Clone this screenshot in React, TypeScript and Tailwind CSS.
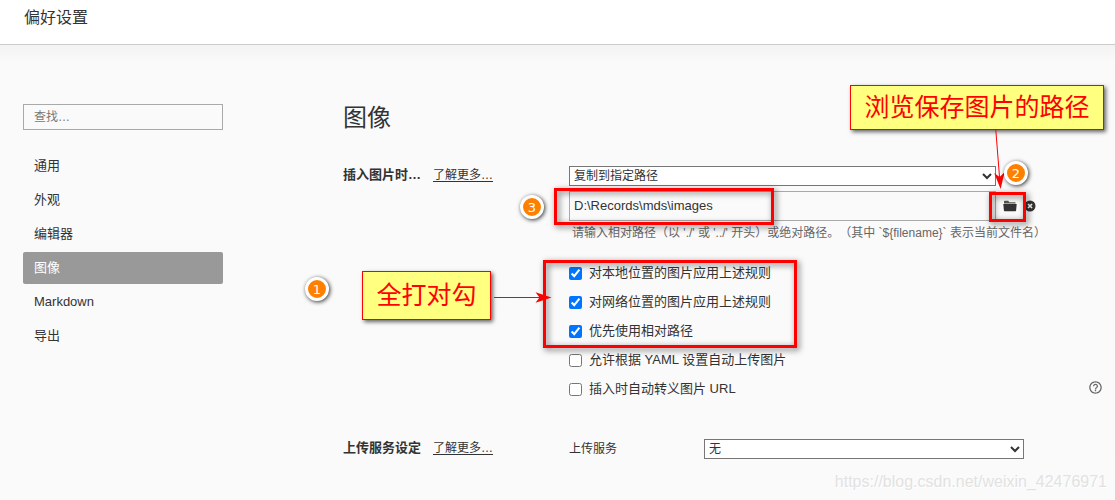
import { useState } from 'react';
import type { ReactNode } from 'react';
import { clsx } from 'clsx';

interface ImageRule {
  id: string;
  label: string;
  checked: boolean;
}

const SECTIONS = ['通用', '外观', '编辑器', '图像', 'Markdown', '导出'];

const IMAGE_RULES: ImageRule[] = [
  { id: 'local', label: '对本地位置的图片应用上述规则', checked: true },
  { id: 'network', label: '对网络位置的图片应用上述规则', checked: true },
  { id: 'relative', label: '优先使用相对路径', checked: true },
  { id: 'yaml', label: '允许根据 YAML 设置自动上传图片', checked: false },
  { id: 'escape', label: '插入时自动转义图片 URL', checked: false },
];

function FolderIcon() {
  return (
    <svg width="14" height="12" viewBox="0 0 14 12" aria-hidden="true">
      <path d="M1 3.4V1.6Q1 .8 1.8.8h3.4l1.2 1.4h5.4q.9 0 .9.8v.4z" fill="#555" />
      <path d="M.3 4h13.4l-.6 6.6q-.1.7-.8.7H1.7q-.7 0-.8-.7z" fill="#333" />
    </svg>
  );
}

function ClearIcon() {
  return (
    <svg width="12" height="12" viewBox="0 0 12 12" aria-hidden="true">
      <circle cx="6" cy="6" r="5.5" fill="#333" />
      <path d="M4 4l4 4M8 4l-4 4" stroke="#fafafa" strokeWidth="1.7" />
    </svg>
  );
}

function HelpIcon() {
  return (
    <svg width="15" height="15" viewBox="0 0 24 24" fill="#666" aria-hidden="true">
      <path d="M11 18h2v-2h-2v2zm1-16C6.48 2 2 6.48 2 12s4.48 10 10 10 10-4.48 10-10S17.52 2 12 2zm0 18c-4.41 0-8-3.59-8-8s3.59-8 8-8 8 3.59 8 8-3.59 8-8 8zm0-14c-2.21 0-4 1.79-4 4h2c0-1.1.9-2 2-2s2 .9 2 2c0 2-3 1.75-3 5h2c0-2.250 3-2.500 3-5 0-2.210-1.790-4-4-4z" />
    </svg>
  );
}

interface SettingRowProps {
  title: string;
  children: ReactNode;
}

function SettingRow({ title, children }: SettingRowProps) {
  return (
    <section className="flex">
      <div className="flex w-[226px] shrink-0 items-start gap-3 leading-[18px]">
        <h2 className="text-[13px] font-bold">{title}</h2>
        <a href="#more" className="text-xs leading-[18px] underline underline-offset-2">
          了解更多…
        </a>
      </div>
      <div className="min-w-0 flex-1">{children}</div>
    </section>
  );
}

function Callout({ className, children }: { className: string; children: ReactNode }) {
  return (
    <div
      className={clsx(
        'absolute flex items-center justify-center whitespace-nowrap border border-[#f00] bg-[#ffff80] text-[25px] text-[#f00] shadow-[2px_2px_4px_rgba(0,0,0,0.6)]',
        className,
      )}
    >
      {children}
    </div>
  );
}

function Frame({ className }: { className: string }) {
  return (
    <div
      className={clsx(
        'absolute border-3 border-[#f00] drop-shadow-[2px_2px_3px_rgba(0,0,0,0.6)]',
        className,
      )}
    />
  );
}

function Badge({ className, children }: { className: string; children: ReactNode }) {
  return (
    <span
      className={clsx(
        "absolute flex size-6 items-center justify-center rounded-full border-3 border-white bg-[#ff8000] font-['DejaVu_Sans',sans-serif] text-[13px] leading-none text-white shadow-[1px_1px_4px_rgba(0,0,0,0.8)]",
        className,
      )}
    >
      {children}
    </span>
  );
}

function Annotations() {
  return (
    <div className="pointer-events-none absolute inset-0 overflow-hidden">
      <Frame className="left-[554px] top-[188px] h-[37px] w-[220px]" />
      <Frame className="left-[989px] top-[192px] h-[30px] w-[37px]" />
      <Frame className="left-[543px] top-[260px] h-[88px] w-[254px]" />

      <Callout className="left-[850px] top-[85px] h-[45px] w-[254px]">浏览保存图片的路径</Callout>
      <Callout className="left-[362px] top-[271px] h-[49px] w-[129px]">全打对勾</Callout>

      <svg className="absolute left-[494px] top-[291px]" width="60" height="13" viewBox="0 0 60 13">
        <path d="M0 6.5h46" stroke="#f00" />
        <path d="M57.500 6.500L41.500 1.200l4 5.300-4 5.300z" fill="#f00" />
      </svg>
      <svg className="absolute left-[990px] top-[130px]" width="18" height="60" viewBox="0 0 18 60">
        <path d="M5.800 0l3.800 48" stroke="#f00" />
        <path d="M10.600 59L4.200 43l5.400 4 5-4.800z" fill="#f00" />
      </svg>

      <Badge className="left-[305px] top-[277px]">1</Badge>
      <Badge className="left-[1004px] top-[161px]">2</Badge>
      <Badge className="left-[520px] top-[195px]">3</Badge>
    </div>
  );
}

export default function App() {
  const [active, setActive] = useState('图像');
  const [path, setPath] = useState('D:\\Records\\mds\\images');
  const [rules, setRules] = useState(IMAGE_RULES);

  const toggleRule = (id: string) => {
    setRules((prev) =>
      prev.map((rule) => (rule.id === id ? { ...rule, checked: !rule.checked } : rule)),
    );
  };

  return (
    <div className="relative min-h-screen bg-[#fafafa] font-['Liberation_Sans','Noto_Sans_CJK_SC',sans-serif] text-[#333]">
      <header className="border-b border-[#ccc] bg-white px-6 pb-[14px] pt-[6px]">
        <h1 className="text-base leading-6">偏好设置</h1>
      </header>

      <div className="flex bg-linear-to-b from-[#f3f3f3] to-[#fafafa] to-[18px] pl-[23px] pr-3 pt-[59px]">
        <aside className="w-[200px] shrink-0">
          <input
            type="search"
            aria-label="查找"
            placeholder="查找…"
            className="block h-[26px] w-full border border-[#a9a9a9] px-[10px] text-xs placeholder:text-[#777]"
          />
          <nav className="mt-5 flex flex-col gap-[2px]">
            {SECTIONS.map((section) => (
              <button
                key={section}
                type="button"
                onClick={() => setActive(section)}
                className={clsx(
                  'h-8 rounded-xs px-[11px] pb-px text-left text-[13px]',
                  active === section && 'bg-[#999] text-white',
                )}
              >
                {section}
              </button>
            ))}
          </nav>
        </aside>

        <main className="ml-[120px] min-w-0 flex-1">
          <h2 className="-mt-[2px] mb-8 text-2xl leading-8">图像</h2>

          <SettingRow title="插入图片时…">
            <select
              aria-label="插入图片时"
              className="block h-5 w-4/5 border border-[#767676] bg-white text-xs"
            >
              <option>复制到指定路径</option>
            </select>
            <div className="mt-[5px] flex items-center">
              <input
                type="text"
                aria-label="图片保存路径"
                value={path}
                onChange={(e) => setPath(e.target.value)}
                className="h-[30px] w-4/5 border border-[#a9a9a9] px-1 pb-[2px] text-[13px]"
              />
              <button type="button" aria-label="浏览" className="ml-[7px]">
                <FolderIcon />
              </button>
              <button type="button" aria-label="清除" className="ml-[7px]" onClick={() => setPath('')}>
                <ClearIcon />
              </button>
            </div>
            <p className="ml-[3px] mt-1 whitespace-nowrap text-xs leading-4 text-[#666] [text-spacing-trim:space-all]">
              请输入相对路径（以 './' 或 '../' 开头）或绝对路径。（其中 `${'{filename}'}` 表示当前文件名）
            </p>

            <div className="mt-[22px] flex items-end justify-between">
              <ul className="flex flex-col gap-[9px]">
                {rules.map((rule) => (
                  <li key={rule.id}>
                    <label className="flex h-5 items-center gap-[7px] text-[13px]">
                      <input
                        type="checkbox"
                        checked={rule.checked}
                        onChange={() => toggleRule(rule.id)}
                        className="size-[13px]"
                      />
                      {rule.label}
                    </label>
                  </li>
                ))}
              </ul>
              <button type="button" aria-label="帮助" className="mb-1">
                <HelpIcon />
              </button>
            </div>
          </SettingRow>

          <div className="mt-10">
            <SettingRow title="上传服务设定">
              <div className="flex items-center">
                <label htmlFor="uploader" className="w-[135px] shrink-0 text-xs">
                  上传服务
                </label>
                <select
                  id="uploader"
                  className="h-5 w-3/5 border border-[#767676] bg-white text-xs"
                >
                  <option>无</option>
                </select>
              </div>
            </SettingRow>
          </div>
        </main>
      </div>

      <Annotations />
      <div className="pointer-events-none absolute bottom-2 right-2 text-base leading-5 text-[#e2e2e2] [text-shadow:1px_1px_0_#fff]">
        https://blog.csdn.net/weixin_42476971
      </div>
    </div>
  );
}
